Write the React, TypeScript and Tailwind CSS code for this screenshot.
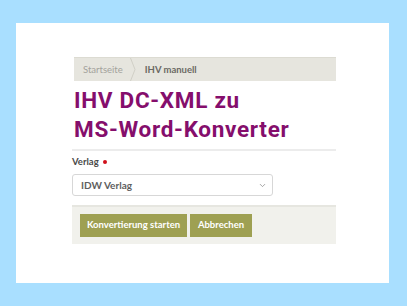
import { ChevronDown } from 'lucide-react';

export default function App() {
  return (
    <div className="w-[407px] h-[306px] bg-[#a9dfff] pt-[23px] pl-[16px]">
      <div className="w-[373px] h-[260px] bg-white pt-[34px] pl-[56px]" style={{ fontFamily: 'Lato, sans-serif' }}>
        <div className="w-[264px]">
          {/* breadcrumb */}
          <div className="ml-[2px] h-[24px] bg-[#e6e5de] border-t border-[#dcdbd2] flex items-center text-[9.5px] leading-[12px]">
            <span className="pl-[9px] text-[#a3a29c]">Startseite</span>
            <svg width="6" height="23" viewBox="0 0 6 23" className="ml-[7px] mr-[9px]">
              <path d="M0.5 0 L5 11.5 L0.5 23" fill="none" stroke="#d0cfc6" strokeWidth="1" />
            </svg>
            <span className="font-bold text-[#6b6a64]">IHV manuell</span>
          </div>

          {/* title */}
          <h1
            className="ml-[2px] mt-[5px] text-[22.5px] leading-[29px] font-bold text-[#850e6c] tracking-[0.7px]"
            style={{ fontFamily: 'Roboto, sans-serif' }}
          >
            IHV DC-XML zu
            <br />
            MS-Word-Konverter
          </h1>

          <div className="mt-[5px] h-[2px] bg-[#ececec]" />

          {/* field */}
          <div className="mt-[5px] h-[12px] flex items-center text-[9.5px] leading-[12px] font-bold text-[#4a4a4a]">
            Verlag
            <span className="ml-[4px] w-[4px] h-[4px] rounded-full bg-[#d0101a]" />
          </div>
          <div className="mt-[6px] w-[201px] h-[22px] border border-[#d7d7d7] rounded-[3px] flex items-center justify-between pl-[8px] pr-[5px]">
            <span className="text-[10px] font-bold text-[#5e5e5e]">IDW Verlag</span>
            <ChevronDown size={9} className="text-[#8a8a8a]" strokeWidth={2} />
          </div>

          {/* actions */}
          <div className="mt-[9px] h-[39px] bg-[#f1f1ec] border-t-2 border-[#e6e6e0] flex items-center gap-[3px] pl-[8px]">
            <button className="h-[23px] w-[107px] bg-[#9ea052] text-white text-[9.5px] font-bold">
              Konvertierung starten
            </button>
            <button className="h-[23px] w-[62px] bg-[#9ea052] text-white text-[9.5px] font-bold">
              Abbrechen
            </button>
          </div>
        </div>
      </div>
    </div>
  );
}
